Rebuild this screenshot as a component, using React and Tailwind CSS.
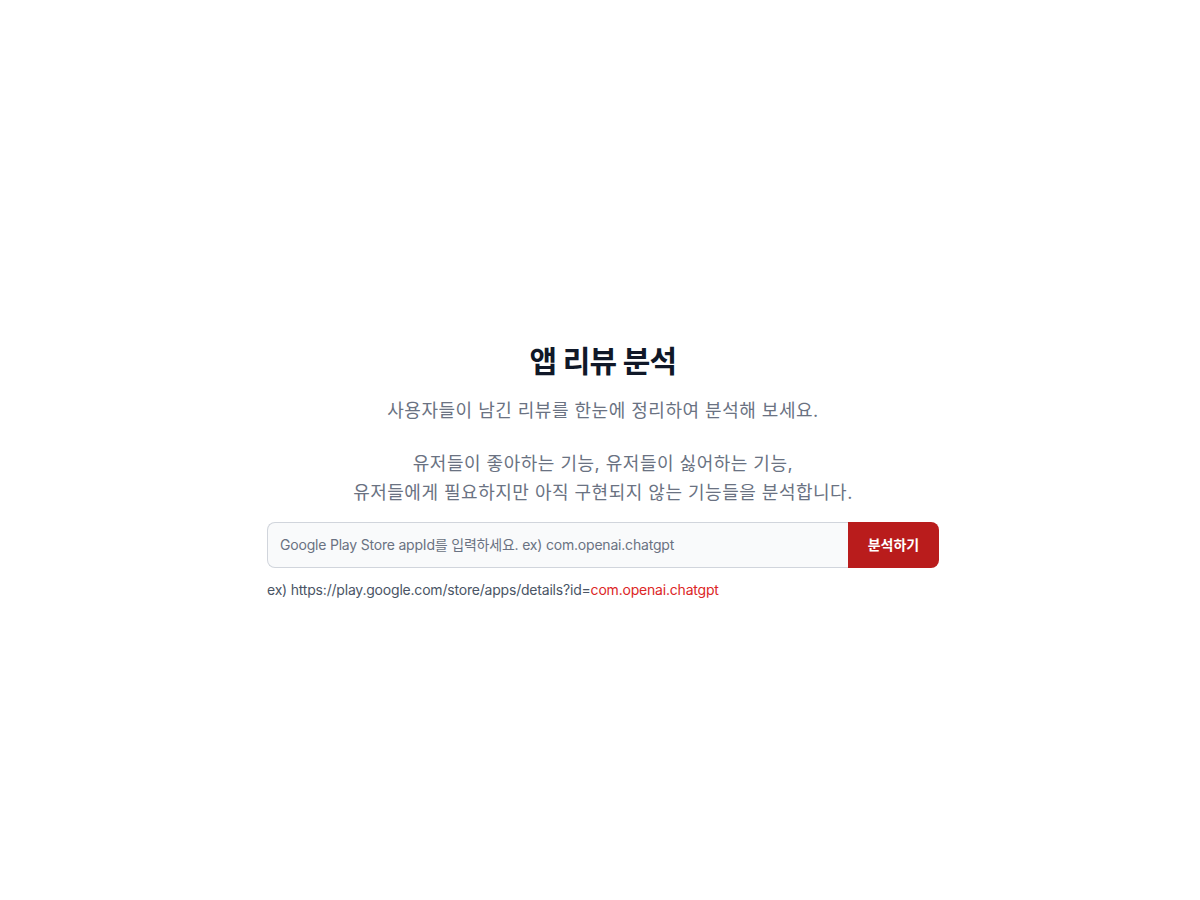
import React from "react";

export default function App() {
  return (
    <div
      className="min-h-screen bg-white pl-[6px] pt-[343px]"
      style={{ fontFamily: 'Inter, "Noto Sans CJK KR", sans-serif' }}
    >
      <div className="max-w-2xl mx-auto flex flex-col">
        {/* 헤더 */}
        <h1 className="text-center text-3xl font-bold text-gray-900 tracking-tight">앱 리뷰 분석</h1>
        <p className="mt-[17px] text-center text-lg leading-[29px] text-gray-500 tracking-[0.5px]">
          사용자들이 남긴 리뷰를 한눈에 정리하여 분석해 보세요.
        </p>
        <p className="mt-6 text-center text-lg leading-[29px] text-gray-500 tracking-[0.5px]">
          유저들이 좋아하는 기능, 유저들이 싫어하는 기능,
          <br />
          유저들에게 필요하지만 아직 구현되지 않는 기능들을 분석합니다.
        </p>

        {/* 입력 */}
        <form className="mt-[15px] flex" onSubmit={(e) => e.preventDefault()}>
          <input
            type="text"
            placeholder="Google Play Store appId를 입력하세요. ex) com.openai.chatgpt"
            className="flex-1 bg-gray-50 border border-gray-300 border-r-0 rounded-l-lg px-3 py-3 text-sm leading-5 tracking-[-0.2px] text-gray-900 placeholder:text-gray-500 outline-none"
          />
          <button
            type="submit"
            className="w-[91px] bg-[#b91c1c] text-white text-sm font-semibold rounded-r-lg"
          >
            분석하기
          </button>
        </form>

        <p className="mt-3 text-sm tracking-[-0.2px] text-gray-600">
          ex) https://play.google.com/store/apps/details?id=
          <span className="text-[#dc2626]">com.openai.chatgpt</span>
        </p>
      </div>
    </div>
  );
}
